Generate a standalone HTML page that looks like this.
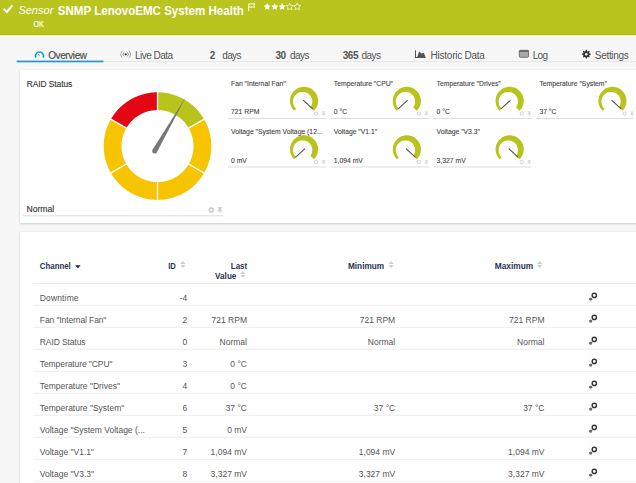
<!DOCTYPE html>
<html><head><meta charset="utf-8">
<style>
html,body{margin:0;padding:0;}
body{width:636px;height:483px;overflow:hidden;background:#f7f7f7;position:relative;font-family:"Liberation Sans",sans-serif;}
.hdr{position:absolute;left:0;top:0;width:636px;height:34px;background:#b9c41e;border-bottom:1px solid #b3be05;}
.hdrline{position:absolute;left:0;top:35px;width:636px;height:1px;background:#e9edc4;border-bottom:1px solid #fdfdfd;}
.panel{position:absolute;background:#fff;box-shadow:0 1px 2px rgba(0,0,0,0.16),0 0 1px rgba(0,0,0,0.12);}
svg{position:absolute;left:0;top:0;}
text{font-family:"Liberation Sans",sans-serif;}
</style></head>
<body>
<div class="hdr"></div>
<div class="hdrline"></div>
<div class="panel" style="left:19.5px;top:70px;width:630px;height:153px"></div>
<div class="panel" style="left:19.5px;top:231.5px;width:630px;height:270px"></div>
<svg width="636" height="483" viewBox="0 0 636 483">
<path d="M3.6 8.7 L6.9 11.9 L12.4 5.3" fill="none" stroke="#fff" stroke-width="2.1"/>
<text x="18.4" y="14" font-size="11" fill="#fff" font-style="italic" textLength="34.9" lengthAdjust="spacing">Sensor</text>
<text x="57.8" y="14.6" font-size="12.3" fill="#fff" font-weight="bold" textLength="186" lengthAdjust="spacingAndGlyphs">SNMP LenovoEMC System Health</text>
<text x="33.5" y="26.9" font-size="8.3" fill="#fff" stroke="#fff" stroke-width="0.2" textLength="10.4" lengthAdjust="spacingAndGlyphs">OK</text>
<path d="M248.7 11.2 V3.9 H255 L253.7 5.5 L255 7.1 H248.7" fill="none" stroke="#fff" stroke-width="0.95"/>
<path d="M267.20 3.10 L268.29 5.30 L270.72 5.66 L268.96 7.37 L269.37 9.79 L267.20 8.65 L265.03 9.79 L265.44 7.37 L263.68 5.66 L266.11 5.30Z" fill="#fff"/>
<path d="M274.70 3.10 L275.79 5.30 L278.22 5.66 L276.46 7.37 L276.87 9.79 L274.70 8.65 L272.53 9.79 L272.94 7.37 L271.18 5.66 L273.61 5.30Z" fill="#fff"/>
<path d="M282.20 3.10 L283.29 5.30 L285.72 5.66 L283.96 7.37 L284.37 9.79 L282.20 8.65 L280.03 9.79 L280.44 7.37 L278.68 5.66 L281.11 5.30Z" fill="#fff"/>
<path d="M289.70 3.10 L290.79 5.30 L293.22 5.66 L291.46 7.37 L291.87 9.79 L289.70 8.65 L287.53 9.79 L287.94 7.37 L286.18 5.66 L288.61 5.30Z" fill="none" stroke="#fff" stroke-width="0.7"/>
<path d="M297.20 3.10 L298.29 5.30 L300.72 5.66 L298.96 7.37 L299.37 9.79 L297.20 8.65 L295.03 9.79 L295.44 7.37 L293.68 5.66 L296.11 5.30Z" fill="none" stroke="#fff" stroke-width="0.7"/>
<rect x="17" y="61" width="619" height="1" fill="#e6e6e6"/>
<rect x="16.7" y="60.6" width="86.8" height="1.7" fill="#1b98d5"/>
<path d="M35.87 57.69 A4 4 0 1 1 43.13 57.69" fill="none" stroke="#1b98d5" stroke-width="1.6"/>
<line x1="40" y1="56" x2="38" y2="54.3" stroke="#1b98d5" stroke-width="0.8"/>
<text x="48.2" y="58.9" font-size="10" fill="#4b4b4b" stroke="#4b4b4b" stroke-width="0.15" textLength="38.9" lengthAdjust="spacing">Overview</text>
<circle cx="125.7" cy="54.3" r="1.1" fill="#333"/>
<path d="M124 52.2 A3 3 0 0 0 124 56.4 M127.4 52.2 A3 3 0 0 1 127.4 56.4" fill="none" stroke="#888" stroke-width="0.9"/>
<path d="M122.4 50.8 A5.2 5.2 0 0 0 122.4 57.8 M129 50.8 A5.2 5.2 0 0 1 129 57.8" fill="none" stroke="#999" stroke-width="0.9"/>
<text x="134.9" y="58.9" font-size="10" fill="#555" textLength="38.2" lengthAdjust="spacing">Live Data</text>
<text x="209.7" y="58.9" font-size="10" fill="#555" font-weight="bold">2</text>
<text x="222.2" y="58.9" font-size="10" fill="#555" textLength="19.3" lengthAdjust="spacing">days</text>
<text x="275.5" y="58.9" font-size="10" fill="#555" font-weight="bold" textLength="10.5" lengthAdjust="spacing">30</text>
<text x="290.1" y="58.9" font-size="10" fill="#555" textLength="19.3" lengthAdjust="spacing">days</text>
<text x="342.7" y="58.9" font-size="10" fill="#555" font-weight="bold" textLength="15.8" lengthAdjust="spacing">365</text>
<text x="361.6" y="58.9" font-size="10" fill="#555" textLength="19.3" lengthAdjust="spacing">days</text>
<path d="M415 50.3 H416 V57 H417.2 L419.2 51.4 L421.5 53.6 L423.9 52.8 L425.6 57.4 V58 H415Z" fill="#555"/>
<text x="430.6" y="58.9" font-size="10" fill="#555" textLength="54.3" lengthAdjust="spacing">Historic Data</text>
<rect x="519.3" y="50.3" width="9.2" height="7" rx="1" fill="#aaa" stroke="#666" stroke-width="0.9"/>
<rect x="519.3" y="50.3" width="9.2" height="1.6" fill="#666"/>
<text x="532.8" y="58.9" font-size="10" fill="#555" textLength="15.2" lengthAdjust="spacing">Log</text>
<path d="M585.87 49.82 L586.73 49.82 L587.23 51.14 L587.81 51.38 L589.09 50.80 L589.70 51.41 L589.12 52.69 L589.36 53.27 L590.68 53.77 L590.68 54.63 L589.36 55.13 L589.12 55.71 L589.70 56.99 L589.09 57.60 L587.81 57.02 L587.23 57.26 L586.73 58.58 L585.87 58.58 L585.37 57.26 L584.79 57.02 L583.51 57.60 L582.90 56.99 L583.48 55.71 L583.24 55.13 L581.92 54.63 L581.92 53.77 L583.24 53.27 L583.48 52.69 L582.90 51.41 L583.51 50.80 L584.79 51.38 L585.37 51.14Z" fill="#333" fill-rule="evenodd"/>
<circle cx="586.3" cy="54.2" r="1.3" fill="#f7f7f7"/>
<text x="594.8" y="58.9" font-size="10" fill="#555" textLength="34" lengthAdjust="spacing">Settings</text>
<text x="26.7" y="86.8" font-size="8.4" fill="#3a3a3a" stroke="#3a3a3a" stroke-width="0.15" textLength="45.6" lengthAdjust="spacing">RAID Status</text>
<text x="26.5" y="211.5" font-size="8.6" fill="#3a3a3a" stroke="#3a3a3a" stroke-width="0.15" textLength="27.6" lengthAdjust="spacing">Normal</text>
<rect x="23" y="215.3" width="200.4" height="1" fill="#ddd"/>
<circle cx="211.3" cy="210" r="2.05" fill="none" stroke="#cbcbcb" stroke-width="1.5" stroke-dasharray="1.2 0.4"/>
<circle cx="211.3" cy="210" r="1.9" fill="none" stroke="#cbcbcb" stroke-width="1.2"/>
<rect x="217.6" y="207.20" width="4.6" height="1" fill="#cbcbcb"/>
<rect x="218.6" y="208.00" width="2.6" height="2.6" fill="#cbcbcb"/>
<rect x="217.4" y="210.50" width="5" height="1" fill="#cbcbcb"/>
<rect x="219.6" y="211.50" width="0.7" height="1.8" fill="#cbcbcb"/>
<path d="M157.50 92.30 L158.91 92.32 L160.32 92.37 L161.72 92.47 L163.12 92.59 L164.52 92.76 L165.92 92.96 L167.30 93.20 L168.69 93.48 L170.06 93.79 L171.42 94.13 L172.78 94.52 L174.13 94.93 L175.46 95.39 L176.78 95.87 L178.09 96.40 L179.38 96.95 L180.66 97.54 L181.92 98.16 L183.17 98.82 L184.40 99.51 L185.61 100.23 L186.80 100.98 L187.97 101.76 L189.12 102.57 L190.25 103.42 L191.36 104.29 L192.44 105.19 L193.50 106.12 L194.53 107.07 L195.54 108.06 L196.53 109.07 L197.48 110.10 L198.41 111.16 L199.31 112.24 L200.18 113.35 L201.03 114.48 L201.84 115.63 L202.62 116.80 L203.37 117.99 L204.09 119.20 L188.68 128.10 L188.20 127.29 L187.69 126.49 L187.17 125.71 L186.62 124.94 L186.06 124.18 L185.48 123.44 L184.87 122.72 L184.25 122.01 L183.61 121.32 L182.96 120.64 L182.28 119.99 L181.59 119.35 L180.88 118.73 L180.16 118.12 L179.42 117.54 L178.66 116.98 L177.89 116.43 L177.11 115.91 L176.31 115.40 L175.50 114.92 L174.68 114.46 L173.84 114.02 L173.00 113.61 L172.14 113.21 L171.28 112.84 L170.40 112.49 L169.52 112.16 L168.62 111.86 L167.72 111.58 L166.82 111.33 L165.90 111.09 L164.98 110.89 L164.06 110.70 L163.13 110.54 L162.20 110.41 L161.26 110.30 L160.32 110.21 L159.38 110.15 L158.44 110.11 L157.50 110.10Z" fill="#b8c31c"/>
<path d="M204.09 119.20 L204.78 120.43 L205.44 121.68 L206.06 122.94 L206.65 124.22 L207.20 125.51 L207.73 126.82 L208.21 128.14 L208.67 129.47 L209.08 130.82 L209.47 132.18 L209.81 133.54 L210.12 134.91 L210.40 136.30 L210.64 137.68 L210.84 139.08 L211.01 140.48 L211.13 141.88 L211.23 143.28 L211.28 144.69 L211.30 146.10 L211.28 147.51 L211.23 148.92 L211.13 150.32 L211.01 151.72 L210.84 153.12 L210.64 154.52 L210.40 155.90 L210.12 157.29 L209.81 158.66 L209.47 160.02 L209.08 161.38 L208.67 162.73 L208.21 164.06 L207.73 165.38 L207.20 166.69 L206.65 167.98 L206.06 169.26 L205.44 170.52 L204.78 171.77 L204.09 173.00 L188.68 164.10 L189.14 163.28 L189.58 162.44 L189.99 161.60 L190.39 160.74 L190.76 159.88 L191.11 159.00 L191.44 158.12 L191.74 157.22 L192.02 156.32 L192.27 155.42 L192.51 154.50 L192.71 153.58 L192.90 152.66 L193.06 151.73 L193.19 150.80 L193.30 149.86 L193.39 148.92 L193.45 147.98 L193.49 147.04 L193.50 146.10 L193.49 145.16 L193.45 144.22 L193.39 143.28 L193.30 142.34 L193.19 141.40 L193.06 140.47 L192.90 139.54 L192.71 138.62 L192.51 137.70 L192.27 136.78 L192.02 135.88 L191.74 134.98 L191.44 134.08 L191.11 133.20 L190.76 132.32 L190.39 131.46 L189.99 130.60 L189.58 129.76 L189.14 128.92 L188.68 128.10Z" fill="#f6c400"/>
<path d="M204.09 173.00 L203.37 174.21 L202.62 175.40 L201.84 176.57 L201.03 177.72 L200.18 178.85 L199.31 179.96 L198.41 181.04 L197.48 182.10 L196.53 183.13 L195.54 184.14 L194.53 185.13 L193.50 186.08 L192.44 187.01 L191.36 187.91 L190.25 188.78 L189.12 189.63 L187.97 190.44 L186.80 191.22 L185.61 191.97 L184.40 192.69 L183.17 193.38 L181.92 194.04 L180.66 194.66 L179.38 195.25 L178.09 195.80 L176.78 196.33 L175.46 196.81 L174.13 197.27 L172.78 197.68 L171.42 198.07 L170.06 198.41 L168.69 198.72 L167.30 199.00 L165.92 199.24 L164.52 199.44 L163.12 199.61 L161.72 199.73 L160.32 199.83 L158.91 199.88 L157.50 199.90 L157.50 182.10 L158.44 182.09 L159.38 182.05 L160.32 181.99 L161.26 181.90 L162.20 181.79 L163.13 181.66 L164.06 181.50 L164.98 181.31 L165.90 181.11 L166.82 180.87 L167.72 180.62 L168.62 180.34 L169.52 180.04 L170.40 179.71 L171.28 179.36 L172.14 178.99 L173.00 178.59 L173.84 178.18 L174.68 177.74 L175.50 177.28 L176.31 176.80 L177.11 176.29 L177.89 175.77 L178.66 175.22 L179.42 174.66 L180.16 174.08 L180.88 173.47 L181.59 172.85 L182.28 172.21 L182.96 171.56 L183.61 170.88 L184.25 170.19 L184.87 169.48 L185.48 168.76 L186.06 168.02 L186.62 167.26 L187.17 166.49 L187.69 165.71 L188.20 164.91 L188.68 164.10Z" fill="#f6c400"/>
<path d="M157.50 199.90 L156.09 199.88 L154.68 199.83 L153.28 199.73 L151.88 199.61 L150.48 199.44 L149.08 199.24 L147.70 199.00 L146.31 198.72 L144.94 198.41 L143.58 198.07 L142.22 197.68 L140.87 197.27 L139.54 196.81 L138.22 196.33 L136.91 195.80 L135.62 195.25 L134.34 194.66 L133.08 194.04 L131.83 193.38 L130.60 192.69 L129.39 191.97 L128.20 191.22 L127.03 190.44 L125.88 189.63 L124.75 188.78 L123.64 187.91 L122.56 187.01 L121.50 186.08 L120.47 185.13 L119.46 184.14 L118.47 183.13 L117.52 182.10 L116.59 181.04 L115.69 179.96 L114.82 178.85 L113.97 177.72 L113.16 176.57 L112.38 175.40 L111.63 174.21 L110.91 173.00 L126.32 164.10 L126.80 164.91 L127.31 165.71 L127.83 166.49 L128.38 167.26 L128.94 168.02 L129.52 168.76 L130.13 169.48 L130.75 170.19 L131.39 170.88 L132.04 171.56 L132.72 172.21 L133.41 172.85 L134.12 173.47 L134.84 174.08 L135.58 174.66 L136.34 175.22 L137.11 175.77 L137.89 176.29 L138.69 176.80 L139.50 177.28 L140.32 177.74 L141.16 178.18 L142.00 178.59 L142.86 178.99 L143.72 179.36 L144.60 179.71 L145.48 180.04 L146.38 180.34 L147.28 180.62 L148.18 180.87 L149.10 181.11 L150.02 181.31 L150.94 181.50 L151.87 181.66 L152.80 181.79 L153.74 181.90 L154.68 181.99 L155.62 182.05 L156.56 182.09 L157.50 182.10Z" fill="#f6c400"/>
<path d="M110.91 173.00 L110.22 171.77 L109.56 170.52 L108.94 169.26 L108.35 167.98 L107.80 166.69 L107.27 165.38 L106.79 164.06 L106.33 162.73 L105.92 161.38 L105.53 160.02 L105.19 158.66 L104.88 157.29 L104.60 155.90 L104.36 154.52 L104.16 153.12 L103.99 151.72 L103.87 150.32 L103.77 148.92 L103.72 147.51 L103.70 146.10 L103.72 144.69 L103.77 143.28 L103.87 141.88 L103.99 140.48 L104.16 139.08 L104.36 137.68 L104.60 136.30 L104.88 134.91 L105.19 133.54 L105.53 132.18 L105.92 130.82 L106.33 129.47 L106.79 128.14 L107.27 126.82 L107.80 125.51 L108.35 124.22 L108.94 122.94 L109.56 121.68 L110.22 120.43 L110.91 119.20 L126.32 128.10 L125.86 128.92 L125.42 129.76 L125.01 130.60 L124.61 131.46 L124.24 132.32 L123.89 133.20 L123.56 134.08 L123.26 134.98 L122.98 135.88 L122.73 136.78 L122.49 137.70 L122.29 138.62 L122.10 139.54 L121.94 140.47 L121.81 141.40 L121.70 142.34 L121.61 143.28 L121.55 144.22 L121.51 145.16 L121.50 146.10 L121.51 147.04 L121.55 147.98 L121.61 148.92 L121.70 149.86 L121.81 150.80 L121.94 151.73 L122.10 152.66 L122.29 153.58 L122.49 154.50 L122.73 155.42 L122.98 156.32 L123.26 157.22 L123.56 158.12 L123.89 159.00 L124.24 159.88 L124.61 160.74 L125.01 161.60 L125.42 162.44 L125.86 163.28 L126.32 164.10Z" fill="#f6c400"/>
<path d="M110.91 119.20 L111.63 117.99 L112.38 116.80 L113.16 115.63 L113.97 114.48 L114.82 113.35 L115.69 112.24 L116.59 111.16 L117.52 110.10 L118.47 109.07 L119.46 108.06 L120.47 107.07 L121.50 106.12 L122.56 105.19 L123.64 104.29 L124.75 103.42 L125.88 102.57 L127.03 101.76 L128.20 100.98 L129.39 100.23 L130.60 99.51 L131.83 98.82 L133.08 98.16 L134.34 97.54 L135.62 96.95 L136.91 96.40 L138.22 95.87 L139.54 95.39 L140.87 94.93 L142.22 94.52 L143.58 94.13 L144.94 93.79 L146.31 93.48 L147.70 93.20 L149.08 92.96 L150.48 92.76 L151.88 92.59 L153.28 92.47 L154.68 92.37 L156.09 92.32 L157.50 92.30 L157.50 110.10 L156.56 110.11 L155.62 110.15 L154.68 110.21 L153.74 110.30 L152.80 110.41 L151.87 110.54 L150.94 110.70 L150.02 110.89 L149.10 111.09 L148.18 111.33 L147.28 111.58 L146.38 111.86 L145.48 112.16 L144.60 112.49 L143.72 112.84 L142.86 113.21 L142.00 113.61 L141.16 114.02 L140.32 114.46 L139.50 114.92 L138.69 115.40 L137.89 115.91 L137.11 116.43 L136.34 116.98 L135.58 117.54 L134.84 118.12 L134.12 118.73 L133.41 119.35 L132.72 119.99 L132.04 120.64 L131.39 121.32 L130.75 122.01 L130.13 122.72 L129.52 123.44 L128.94 124.18 L128.38 124.94 L127.83 125.71 L127.31 126.49 L126.80 127.29 L126.32 128.10Z" fill="#e30613"/>
<line x1="157.50" y1="113.70" x2="157.50" y2="89.61" stroke="#fff" stroke-width="1.3"/>
<line x1="185.56" y1="129.90" x2="206.42" y2="117.85" stroke="#fff" stroke-width="1.3"/>
<line x1="185.56" y1="162.30" x2="206.42" y2="174.34" stroke="#fff" stroke-width="1.3"/>
<line x1="157.50" y1="178.50" x2="157.50" y2="202.59" stroke="#fff" stroke-width="1.3"/>
<line x1="129.44" y1="162.30" x2="108.58" y2="174.35" stroke="#fff" stroke-width="1.3"/>
<line x1="129.44" y1="129.90" x2="108.58" y2="117.85" stroke="#fff" stroke-width="1.3"/>
<path d="M156.87 152.20 L186.00 96.74 L152.53 149.70Z" fill="#777"/>
<circle cx="154.70" cy="150.95" r="2.5" fill="#777"/>
<text x="231.0" y="85.5" font-size="6.8" fill="#444" stroke="#444" stroke-width="0.1">Fan "Internal Fan"</text>
<text x="231.0" y="114.4" font-size="6.8" fill="#444" stroke="#444" stroke-width="0.1">721 RPM</text>
<path d="M294.12 110.78 L293.37 109.97 L292.68 109.11 L292.07 108.19 L291.53 107.23 L291.07 106.23 L290.69 105.19 L290.39 104.13 L290.17 103.05 L290.04 101.95 L290.00 100.85 L290.04 99.75 L290.17 98.65 L290.39 97.57 L290.69 96.51 L291.07 95.47 L291.53 94.47 L292.07 93.51 L292.68 92.59 L293.37 91.73 L294.12 90.92 L294.93 90.17 L295.79 89.48 L296.71 88.87 L297.67 88.33 L298.67 87.87 L299.71 87.49 L300.77 87.19 L301.85 86.97 L302.95 86.84 L304.05 86.80 L305.15 86.84 L306.25 86.97 L307.33 87.19 L308.39 87.49 L309.43 87.87 L310.43 88.33 L311.39 88.87 L312.31 89.48 L313.17 90.17 L313.98 90.92 L314.73 91.73 L315.42 92.59 L316.03 93.51 L316.57 94.47 L317.03 95.47 L317.41 96.51 L317.71 97.57 L317.93 98.65 L318.06 99.75 L318.10 100.85 L318.06 101.95 L317.93 103.05 L317.71 104.13 L317.41 105.19 L317.03 106.23 L316.57 107.23 L316.03 108.19 L315.42 109.11 L314.73 109.97 L313.98 110.78 L310.44 107.24 L310.84 106.65 L311.19 106.04 L311.49 105.41 L311.75 104.77 L311.95 104.12 L312.11 103.47 L312.22 102.81 L312.28 102.15 L312.30 101.50 L312.27 100.85 L312.21 100.21 L312.10 99.58 L311.94 98.95 L311.75 98.35 L311.52 97.75 L311.25 97.18 L310.95 96.62 L310.61 96.09 L310.23 95.57 L309.81 95.09 L309.37 94.62 L308.89 94.19 L308.38 93.78 L307.84 93.41 L307.27 93.08 L306.67 92.78 L306.05 92.52 L305.40 92.30 L304.74 92.13 L304.05 92.00 L303.35 91.93 L302.63 91.90 L301.91 91.93 L301.18 92.01 L300.45 92.15 L299.72 92.36 L299.00 92.62 L298.30 92.94 L297.62 93.32 L296.96 93.76 L296.33 94.26 L295.74 94.81 L295.19 95.42 L294.70 96.08 L294.25 96.79 L293.87 97.54 L293.55 98.33 L293.30 99.15 L293.13 99.99 L293.03 100.85 L293.00 101.72 L293.06 102.59 L293.19 103.46 L293.40 104.31 L293.69 105.14 L294.06 105.94 L294.49 106.71 L295.00 107.43 L295.56 108.10 L296.19 108.71Z" fill="#b8c31c"/>
<line x1="303.17" y1="100.03" x2="312.68" y2="108.90" stroke="#505050" stroke-width="1.05"/>
<circle cx="316.1" cy="113.6" r="1.6" fill="none" stroke="#d6d6d6" stroke-width="1.1"/>
<rect x="321.9" y="111.40" width="3.4" height="0.8" fill="#d6d6d6"/>
<rect x="322.59999999999997" y="112.10" width="2" height="2" fill="#d6d6d6"/>
<rect x="321.79999999999995" y="114.00" width="3.6" height="0.8" fill="#d6d6d6"/>
<rect x="323.29999999999995" y="114.80" width="0.6" height="1.5" fill="#d6d6d6"/>
<rect x="228.00" y="118.00" width="98" height="1" fill="#ddd"/>
<text x="333.8" y="85.5" font-size="6.8" fill="#444" stroke="#444" stroke-width="0.1">Temperature "CPU"</text>
<text x="333.8" y="114.4" font-size="6.8" fill="#444" stroke="#444" stroke-width="0.1">0 °C</text>
<path d="M396.92 110.78 L396.17 109.97 L395.48 109.11 L394.87 108.19 L394.33 107.23 L393.87 106.23 L393.49 105.19 L393.19 104.13 L392.97 103.05 L392.84 101.95 L392.80 100.85 L392.84 99.75 L392.97 98.65 L393.19 97.57 L393.49 96.51 L393.87 95.47 L394.33 94.47 L394.87 93.51 L395.48 92.59 L396.17 91.73 L396.92 90.92 L397.73 90.17 L398.59 89.48 L399.51 88.87 L400.47 88.33 L401.47 87.87 L402.51 87.49 L403.57 87.19 L404.65 86.97 L405.75 86.84 L406.85 86.80 L407.95 86.84 L409.05 86.97 L410.13 87.19 L411.19 87.49 L412.23 87.87 L413.23 88.33 L414.19 88.87 L415.11 89.48 L415.97 90.17 L416.78 90.92 L417.53 91.73 L418.22 92.59 L418.83 93.51 L419.37 94.47 L419.83 95.47 L420.21 96.51 L420.51 97.57 L420.73 98.65 L420.86 99.75 L420.90 100.85 L420.86 101.95 L420.73 103.05 L420.51 104.13 L420.21 105.19 L419.83 106.23 L419.37 107.23 L418.83 108.19 L418.22 109.11 L417.53 109.97 L416.78 110.78 L413.24 107.24 L413.64 106.65 L413.99 106.04 L414.29 105.41 L414.55 104.77 L414.75 104.12 L414.91 103.47 L415.02 102.81 L415.08 102.15 L415.10 101.50 L415.07 100.85 L415.01 100.21 L414.90 99.58 L414.74 98.95 L414.55 98.35 L414.32 97.75 L414.05 97.18 L413.75 96.62 L413.41 96.09 L413.03 95.57 L412.61 95.09 L412.17 94.62 L411.69 94.19 L411.18 93.78 L410.64 93.41 L410.07 93.08 L409.47 92.78 L408.85 92.52 L408.20 92.30 L407.54 92.13 L406.85 92.00 L406.15 91.93 L405.43 91.90 L404.71 91.93 L403.98 92.01 L403.25 92.15 L402.52 92.36 L401.80 92.62 L401.10 92.94 L400.42 93.32 L399.76 93.76 L399.13 94.26 L398.54 94.81 L397.99 95.42 L397.50 96.08 L397.05 96.79 L396.67 97.54 L396.35 98.33 L396.10 99.15 L395.93 99.99 L395.83 100.85 L395.80 101.72 L395.86 102.59 L395.99 103.46 L396.20 104.31 L396.49 105.14 L396.86 105.94 L397.29 106.71 L397.80 107.43 L398.36 108.10 L398.99 108.71Z" fill="#b8c31c"/>
<line x1="407.73" y1="100.03" x2="398.22" y2="108.90" stroke="#505050" stroke-width="1.05"/>
<circle cx="418.90000000000003" cy="113.6" r="1.6" fill="none" stroke="#d6d6d6" stroke-width="1.1"/>
<rect x="424.7" y="111.40" width="3.4" height="0.8" fill="#d6d6d6"/>
<rect x="425.4" y="112.10" width="2" height="2" fill="#d6d6d6"/>
<rect x="424.59999999999997" y="114.00" width="3.6" height="0.8" fill="#d6d6d6"/>
<rect x="426.09999999999997" y="114.80" width="0.6" height="1.5" fill="#d6d6d6"/>
<rect x="330.80" y="118.00" width="98" height="1" fill="#ddd"/>
<text x="436.6" y="85.5" font-size="6.8" fill="#444" stroke="#444" stroke-width="0.1">Temperature "Drives"</text>
<text x="436.6" y="114.4" font-size="6.8" fill="#444" stroke="#444" stroke-width="0.1">0 °C</text>
<path d="M499.72 110.78 L498.97 109.97 L498.28 109.11 L497.67 108.19 L497.13 107.23 L496.67 106.23 L496.29 105.19 L495.99 104.13 L495.77 103.05 L495.64 101.95 L495.60 100.85 L495.64 99.75 L495.77 98.65 L495.99 97.57 L496.29 96.51 L496.67 95.47 L497.13 94.47 L497.67 93.51 L498.28 92.59 L498.97 91.73 L499.72 90.92 L500.53 90.17 L501.39 89.48 L502.31 88.87 L503.27 88.33 L504.27 87.87 L505.31 87.49 L506.37 87.19 L507.45 86.97 L508.55 86.84 L509.65 86.80 L510.75 86.84 L511.85 86.97 L512.93 87.19 L513.99 87.49 L515.03 87.87 L516.03 88.33 L516.99 88.87 L517.91 89.48 L518.77 90.17 L519.58 90.92 L520.33 91.73 L521.02 92.59 L521.63 93.51 L522.17 94.47 L522.63 95.47 L523.01 96.51 L523.31 97.57 L523.53 98.65 L523.66 99.75 L523.70 100.85 L523.66 101.95 L523.53 103.05 L523.31 104.13 L523.01 105.19 L522.63 106.23 L522.17 107.23 L521.63 108.19 L521.02 109.11 L520.33 109.97 L519.58 110.78 L516.04 107.24 L516.44 106.65 L516.79 106.04 L517.09 105.41 L517.35 104.77 L517.55 104.12 L517.71 103.47 L517.82 102.81 L517.88 102.15 L517.90 101.50 L517.87 100.85 L517.81 100.21 L517.70 99.58 L517.54 98.95 L517.35 98.35 L517.12 97.75 L516.85 97.18 L516.55 96.62 L516.21 96.09 L515.83 95.57 L515.41 95.09 L514.97 94.62 L514.49 94.19 L513.98 93.78 L513.44 93.41 L512.87 93.08 L512.27 92.78 L511.65 92.52 L511.00 92.30 L510.34 92.13 L509.65 92.00 L508.95 91.93 L508.23 91.90 L507.51 91.93 L506.78 92.01 L506.05 92.15 L505.32 92.36 L504.60 92.62 L503.90 92.94 L503.22 93.32 L502.56 93.76 L501.93 94.26 L501.34 94.81 L500.79 95.42 L500.30 96.08 L499.85 96.79 L499.47 97.54 L499.15 98.33 L498.90 99.15 L498.73 99.99 L498.63 100.85 L498.60 101.72 L498.66 102.59 L498.79 103.46 L499.00 104.31 L499.29 105.14 L499.66 105.94 L500.09 106.71 L500.60 107.43 L501.16 108.10 L501.79 108.71Z" fill="#b8c31c"/>
<line x1="510.53" y1="100.03" x2="501.02" y2="108.90" stroke="#505050" stroke-width="1.05"/>
<circle cx="521.7" cy="113.6" r="1.6" fill="none" stroke="#d6d6d6" stroke-width="1.1"/>
<rect x="527.5" y="111.40" width="3.4" height="0.8" fill="#d6d6d6"/>
<rect x="528.2" y="112.10" width="2" height="2" fill="#d6d6d6"/>
<rect x="527.4" y="114.00" width="3.6" height="0.8" fill="#d6d6d6"/>
<rect x="528.9" y="114.80" width="0.6" height="1.5" fill="#d6d6d6"/>
<rect x="433.60" y="118.00" width="98" height="1" fill="#ddd"/>
<text x="539.4" y="85.5" font-size="6.8" fill="#444" stroke="#444" stroke-width="0.1">Temperature "System"</text>
<text x="539.4" y="114.4" font-size="6.8" fill="#444" stroke="#444" stroke-width="0.1">37 °C</text>
<path d="M602.52 110.78 L601.77 109.97 L601.08 109.11 L600.47 108.19 L599.93 107.23 L599.47 106.23 L599.09 105.19 L598.79 104.13 L598.57 103.05 L598.44 101.95 L598.40 100.85 L598.44 99.75 L598.57 98.65 L598.79 97.57 L599.09 96.51 L599.47 95.47 L599.93 94.47 L600.47 93.51 L601.08 92.59 L601.77 91.73 L602.52 90.92 L603.33 90.17 L604.19 89.48 L605.11 88.87 L606.07 88.33 L607.07 87.87 L608.11 87.49 L609.17 87.19 L610.25 86.97 L611.35 86.84 L612.45 86.80 L613.55 86.84 L614.65 86.97 L615.73 87.19 L616.79 87.49 L617.83 87.87 L618.83 88.33 L619.79 88.87 L620.71 89.48 L621.57 90.17 L622.38 90.92 L623.13 91.73 L623.82 92.59 L624.43 93.51 L624.97 94.47 L625.43 95.47 L625.81 96.51 L626.11 97.57 L626.33 98.65 L626.46 99.75 L626.50 100.85 L626.46 101.95 L626.33 103.05 L626.11 104.13 L625.81 105.19 L625.43 106.23 L624.97 107.23 L624.43 108.19 L623.82 109.11 L623.13 109.97 L622.38 110.78 L618.84 107.24 L619.24 106.65 L619.59 106.04 L619.89 105.41 L620.15 104.77 L620.35 104.12 L620.51 103.47 L620.62 102.81 L620.68 102.15 L620.70 101.50 L620.67 100.85 L620.61 100.21 L620.50 99.58 L620.34 98.95 L620.15 98.35 L619.92 97.75 L619.65 97.18 L619.35 96.62 L619.01 96.09 L618.63 95.57 L618.21 95.09 L617.77 94.62 L617.29 94.19 L616.78 93.78 L616.24 93.41 L615.67 93.08 L615.07 92.78 L614.45 92.52 L613.80 92.30 L613.14 92.13 L612.45 92.00 L611.75 91.93 L611.03 91.90 L610.31 91.93 L609.58 92.01 L608.85 92.15 L608.12 92.36 L607.40 92.62 L606.70 92.94 L606.02 93.32 L605.36 93.76 L604.73 94.26 L604.14 94.81 L603.59 95.42 L603.10 96.08 L602.65 96.79 L602.27 97.54 L601.95 98.33 L601.70 99.15 L601.53 99.99 L601.43 100.85 L601.40 101.72 L601.46 102.59 L601.59 103.46 L601.80 104.31 L602.09 105.14 L602.46 105.94 L602.89 106.71 L603.40 107.43 L603.96 108.10 L604.59 108.71Z" fill="#b8c31c"/>
<line x1="611.57" y1="100.03" x2="621.08" y2="108.90" stroke="#505050" stroke-width="1.05"/>
<circle cx="624.5" cy="113.6" r="1.6" fill="none" stroke="#d6d6d6" stroke-width="1.1"/>
<rect x="630.3" y="111.40" width="3.4" height="0.8" fill="#d6d6d6"/>
<rect x="631.0" y="112.10" width="2" height="2" fill="#d6d6d6"/>
<rect x="630.1999999999999" y="114.00" width="3.6" height="0.8" fill="#d6d6d6"/>
<rect x="631.6999999999999" y="114.80" width="0.6" height="1.5" fill="#d6d6d6"/>
<rect x="536.40" y="118.00" width="98" height="1" fill="#ddd"/>
<text x="231.0" y="134.0" font-size="6.8" fill="#444" stroke="#444" stroke-width="0.1">Voltage "System Voltage (12...</text>
<text x="231.0" y="162.9" font-size="6.8" fill="#444" stroke="#444" stroke-width="0.1">0 mV</text>
<path d="M294.12 159.28 L293.37 158.47 L292.68 157.61 L292.07 156.69 L291.53 155.73 L291.07 154.73 L290.69 153.69 L290.39 152.63 L290.17 151.55 L290.04 150.45 L290.00 149.35 L290.04 148.25 L290.17 147.15 L290.39 146.07 L290.69 145.01 L291.07 143.97 L291.53 142.97 L292.07 142.01 L292.68 141.09 L293.37 140.23 L294.12 139.42 L294.93 138.67 L295.79 137.98 L296.71 137.37 L297.67 136.83 L298.67 136.37 L299.71 135.99 L300.77 135.69 L301.85 135.47 L302.95 135.34 L304.05 135.30 L305.15 135.34 L306.25 135.47 L307.33 135.69 L308.39 135.99 L309.43 136.37 L310.43 136.83 L311.39 137.37 L312.31 137.98 L313.17 138.67 L313.98 139.42 L314.73 140.23 L315.42 141.09 L316.03 142.01 L316.57 142.97 L317.03 143.97 L317.41 145.01 L317.71 146.07 L317.93 147.15 L318.06 148.25 L318.10 149.35 L318.06 150.45 L317.93 151.55 L317.71 152.63 L317.41 153.69 L317.03 154.73 L316.57 155.73 L316.03 156.69 L315.42 157.61 L314.73 158.47 L313.98 159.28 L310.44 155.74 L310.84 155.15 L311.19 154.54 L311.49 153.91 L311.75 153.27 L311.95 152.62 L312.11 151.97 L312.22 151.31 L312.28 150.65 L312.30 150.00 L312.27 149.35 L312.21 148.71 L312.10 148.08 L311.94 147.45 L311.75 146.85 L311.52 146.25 L311.25 145.68 L310.95 145.12 L310.61 144.59 L310.23 144.07 L309.81 143.59 L309.37 143.12 L308.89 142.69 L308.38 142.28 L307.84 141.91 L307.27 141.58 L306.67 141.28 L306.05 141.02 L305.40 140.80 L304.74 140.63 L304.05 140.50 L303.35 140.43 L302.63 140.40 L301.91 140.43 L301.18 140.51 L300.45 140.65 L299.72 140.86 L299.00 141.12 L298.30 141.44 L297.62 141.82 L296.96 142.26 L296.33 142.76 L295.74 143.31 L295.19 143.92 L294.70 144.58 L294.25 145.29 L293.87 146.04 L293.55 146.83 L293.30 147.65 L293.13 148.49 L293.03 149.35 L293.00 150.22 L293.06 151.09 L293.19 151.96 L293.40 152.81 L293.69 153.64 L294.06 154.44 L294.49 155.21 L295.00 155.93 L295.56 156.60 L296.19 157.21Z" fill="#b8c31c"/>
<line x1="304.93" y1="148.53" x2="295.42" y2="157.40" stroke="#505050" stroke-width="1.05"/>
<circle cx="316.1" cy="162.1" r="1.6" fill="none" stroke="#d6d6d6" stroke-width="1.1"/>
<rect x="321.9" y="159.90" width="3.4" height="0.8" fill="#d6d6d6"/>
<rect x="322.59999999999997" y="160.60" width="2" height="2" fill="#d6d6d6"/>
<rect x="321.79999999999995" y="162.50" width="3.6" height="0.8" fill="#d6d6d6"/>
<rect x="323.29999999999995" y="163.30" width="0.6" height="1.5" fill="#d6d6d6"/>
<rect x="228.00" y="166.50" width="98" height="1" fill="#ddd"/>
<text x="333.8" y="134.0" font-size="6.8" fill="#444" stroke="#444" stroke-width="0.1">Voltage "V1.1"</text>
<text x="333.8" y="162.9" font-size="6.8" fill="#444" stroke="#444" stroke-width="0.1">1,094 mV</text>
<path d="M396.92 159.28 L396.17 158.47 L395.48 157.61 L394.87 156.69 L394.33 155.73 L393.87 154.73 L393.49 153.69 L393.19 152.63 L392.97 151.55 L392.84 150.45 L392.80 149.35 L392.84 148.25 L392.97 147.15 L393.19 146.07 L393.49 145.01 L393.87 143.97 L394.33 142.97 L394.87 142.01 L395.48 141.09 L396.17 140.23 L396.92 139.42 L397.73 138.67 L398.59 137.98 L399.51 137.37 L400.47 136.83 L401.47 136.37 L402.51 135.99 L403.57 135.69 L404.65 135.47 L405.75 135.34 L406.85 135.30 L407.95 135.34 L409.05 135.47 L410.13 135.69 L411.19 135.99 L412.23 136.37 L413.23 136.83 L414.19 137.37 L415.11 137.98 L415.97 138.67 L416.78 139.42 L417.53 140.23 L418.22 141.09 L418.83 142.01 L419.37 142.97 L419.83 143.97 L420.21 145.01 L420.51 146.07 L420.73 147.15 L420.86 148.25 L420.90 149.35 L420.86 150.45 L420.73 151.55 L420.51 152.63 L420.21 153.69 L419.83 154.73 L419.37 155.73 L418.83 156.69 L418.22 157.61 L417.53 158.47 L416.78 159.28 L413.24 155.74 L413.64 155.15 L413.99 154.54 L414.29 153.91 L414.55 153.27 L414.75 152.62 L414.91 151.97 L415.02 151.31 L415.08 150.65 L415.10 150.00 L415.07 149.35 L415.01 148.71 L414.90 148.08 L414.74 147.45 L414.55 146.85 L414.32 146.25 L414.05 145.68 L413.75 145.12 L413.41 144.59 L413.03 144.07 L412.61 143.59 L412.17 143.12 L411.69 142.69 L411.18 142.28 L410.64 141.91 L410.07 141.58 L409.47 141.28 L408.85 141.02 L408.20 140.80 L407.54 140.63 L406.85 140.50 L406.15 140.43 L405.43 140.40 L404.71 140.43 L403.98 140.51 L403.25 140.65 L402.52 140.86 L401.80 141.12 L401.10 141.44 L400.42 141.82 L399.76 142.26 L399.13 142.76 L398.54 143.31 L397.99 143.92 L397.50 144.58 L397.05 145.29 L396.67 146.04 L396.35 146.83 L396.10 147.65 L395.93 148.49 L395.83 149.35 L395.80 150.22 L395.86 151.09 L395.99 151.96 L396.20 152.81 L396.49 153.64 L396.86 154.44 L397.29 155.21 L397.80 155.93 L398.36 156.60 L398.99 157.21Z" fill="#b8c31c"/>
<line x1="405.97" y1="148.53" x2="415.48" y2="157.40" stroke="#505050" stroke-width="1.05"/>
<circle cx="418.90000000000003" cy="162.1" r="1.6" fill="none" stroke="#d6d6d6" stroke-width="1.1"/>
<rect x="424.7" y="159.90" width="3.4" height="0.8" fill="#d6d6d6"/>
<rect x="425.4" y="160.60" width="2" height="2" fill="#d6d6d6"/>
<rect x="424.59999999999997" y="162.50" width="3.6" height="0.8" fill="#d6d6d6"/>
<rect x="426.09999999999997" y="163.30" width="0.6" height="1.5" fill="#d6d6d6"/>
<rect x="330.80" y="166.50" width="98" height="1" fill="#ddd"/>
<text x="436.6" y="134.0" font-size="6.8" fill="#444" stroke="#444" stroke-width="0.1">Voltage "V3.3"</text>
<text x="436.6" y="162.9" font-size="6.8" fill="#444" stroke="#444" stroke-width="0.1">3,327 mV</text>
<path d="M499.72 159.28 L498.97 158.47 L498.28 157.61 L497.67 156.69 L497.13 155.73 L496.67 154.73 L496.29 153.69 L495.99 152.63 L495.77 151.55 L495.64 150.45 L495.60 149.35 L495.64 148.25 L495.77 147.15 L495.99 146.07 L496.29 145.01 L496.67 143.97 L497.13 142.97 L497.67 142.01 L498.28 141.09 L498.97 140.23 L499.72 139.42 L500.53 138.67 L501.39 137.98 L502.31 137.37 L503.27 136.83 L504.27 136.37 L505.31 135.99 L506.37 135.69 L507.45 135.47 L508.55 135.34 L509.65 135.30 L510.75 135.34 L511.85 135.47 L512.93 135.69 L513.99 135.99 L515.03 136.37 L516.03 136.83 L516.99 137.37 L517.91 137.98 L518.77 138.67 L519.58 139.42 L520.33 140.23 L521.02 141.09 L521.63 142.01 L522.17 142.97 L522.63 143.97 L523.01 145.01 L523.31 146.07 L523.53 147.15 L523.66 148.25 L523.70 149.35 L523.66 150.45 L523.53 151.55 L523.31 152.63 L523.01 153.69 L522.63 154.73 L522.17 155.73 L521.63 156.69 L521.02 157.61 L520.33 158.47 L519.58 159.28 L516.04 155.74 L516.44 155.15 L516.79 154.54 L517.09 153.91 L517.35 153.27 L517.55 152.62 L517.71 151.97 L517.82 151.31 L517.88 150.65 L517.90 150.00 L517.87 149.35 L517.81 148.71 L517.70 148.08 L517.54 147.45 L517.35 146.85 L517.12 146.25 L516.85 145.68 L516.55 145.12 L516.21 144.59 L515.83 144.07 L515.41 143.59 L514.97 143.12 L514.49 142.69 L513.98 142.28 L513.44 141.91 L512.87 141.58 L512.27 141.28 L511.65 141.02 L511.00 140.80 L510.34 140.63 L509.65 140.50 L508.95 140.43 L508.23 140.40 L507.51 140.43 L506.78 140.51 L506.05 140.65 L505.32 140.86 L504.60 141.12 L503.90 141.44 L503.22 141.82 L502.56 142.26 L501.93 142.76 L501.34 143.31 L500.79 143.92 L500.30 144.58 L499.85 145.29 L499.47 146.04 L499.15 146.83 L498.90 147.65 L498.73 148.49 L498.63 149.35 L498.60 150.22 L498.66 151.09 L498.79 151.96 L499.00 152.81 L499.29 153.64 L499.66 154.44 L500.09 155.21 L500.60 155.93 L501.16 156.60 L501.79 157.21Z" fill="#b8c31c"/>
<line x1="508.77" y1="148.53" x2="518.28" y2="157.40" stroke="#505050" stroke-width="1.05"/>
<circle cx="521.7" cy="162.1" r="1.6" fill="none" stroke="#d6d6d6" stroke-width="1.1"/>
<rect x="527.5" y="159.90" width="3.4" height="0.8" fill="#d6d6d6"/>
<rect x="528.2" y="160.60" width="2" height="2" fill="#d6d6d6"/>
<rect x="527.4" y="162.50" width="3.6" height="0.8" fill="#d6d6d6"/>
<rect x="528.9" y="163.30" width="0.6" height="1.5" fill="#d6d6d6"/>
<rect x="433.60" y="166.50" width="98" height="1" fill="#ddd"/>
<text x="39.8" y="268.9" font-size="8.5" fill="#2a3350" font-weight="bold" textLength="31" lengthAdjust="spacingAndGlyphs">Channel</text>
<path d="M75.2 265.2 H80.6 L77.9 268.4Z" fill="#1e2540"/>
<text x="175.8" y="268.9" font-size="8.5" fill="#2a3350" font-weight="bold" text-anchor="end" textLength="7.6" lengthAdjust="spacingAndGlyphs">ID</text>
<path d="M180.2 264 L182.79999999999998 261 L185.39999999999998 264Z M180.2 265 L182.79999999999998 268 L185.39999999999998 265Z" fill="#cfcfcf"/>
<text x="247.2" y="268.9" font-size="8.5" fill="#2a3350" font-weight="bold" text-anchor="end" textLength="16.4" lengthAdjust="spacingAndGlyphs">Last</text>
<text x="236.4" y="278.7" font-size="8.5" fill="#2a3350" font-weight="bold" text-anchor="end" textLength="21.3" lengthAdjust="spacingAndGlyphs">Value</text>
<path d="M240.2 274 L242.79999999999998 271 L245.39999999999998 274Z M240.2 275 L242.79999999999998 278 L245.39999999999998 275Z" fill="#cfcfcf"/>
<text x="384.2" y="268.9" font-size="8.5" fill="#2a3350" font-weight="bold" text-anchor="end" textLength="36.3" lengthAdjust="spacingAndGlyphs">Minimum</text>
<path d="M388.5 264 L391.1 261 L393.7 264Z M388.5 265 L391.1 268 L393.7 265Z" fill="#cfcfcf"/>
<text x="533.2" y="268.9" font-size="8.5" fill="#2a3350" font-weight="bold" text-anchor="end" textLength="38.5" lengthAdjust="spacingAndGlyphs">Maximum</text>
<path d="M537.1 264 L539.7 261 L542.3000000000001 264Z M537.1 265 L539.7 268 L542.3000000000001 265Z" fill="#cfcfcf"/>
<rect x="33" y="283" width="603" height="1" fill="#ebebeb"/>
<text x="39.8" y="300.8" font-size="8.5" fill="#555" textLength="38.8" lengthAdjust="spacing">Downtime</text>
<text x="187.2" y="300.8" font-size="8.5" fill="#555" text-anchor="end">-4</text>
<circle cx="594.3" cy="295.40" r="2.1" fill="none" stroke="#333" stroke-width="1.4"/>
<circle cx="590.7" cy="299.10" r="1.7" fill="#6a6a6a"/>
<rect x="33" y="304.80" width="603" height="1" fill="#eeeeee"/>
<text x="39.8" y="322.8" font-size="8.5" fill="#555" textLength="66.6" lengthAdjust="spacing">Fan "Internal Fan"</text>
<text x="187.2" y="322.8" font-size="8.5" fill="#555" text-anchor="end">2</text>
<text x="247" y="322.8" font-size="8.5" fill="#555" text-anchor="end">721 RPM</text>
<text x="395.2" y="322.8" font-size="8.5" fill="#555" text-anchor="end">721 RPM</text>
<text x="544.5" y="322.8" font-size="8.5" fill="#555" text-anchor="end">721 RPM</text>
<circle cx="594.3" cy="317.40" r="2.1" fill="none" stroke="#333" stroke-width="1.4"/>
<circle cx="590.7" cy="321.10" r="1.7" fill="#6a6a6a"/>
<rect x="33" y="326.80" width="603" height="1" fill="#eeeeee"/>
<text x="39.8" y="344.8" font-size="8.5" fill="#555" textLength="45.7" lengthAdjust="spacing">RAID Status</text>
<text x="187.2" y="344.8" font-size="8.5" fill="#555" text-anchor="end">0</text>
<text x="247" y="344.8" font-size="8.5" fill="#555" text-anchor="end">Normal</text>
<text x="395.2" y="344.8" font-size="8.5" fill="#555" text-anchor="end">Normal</text>
<text x="544.5" y="344.8" font-size="8.5" fill="#555" text-anchor="end">Normal</text>
<circle cx="594.3" cy="339.40" r="2.1" fill="none" stroke="#333" stroke-width="1.4"/>
<circle cx="590.7" cy="343.10" r="1.7" fill="#6a6a6a"/>
<rect x="33" y="348.80" width="603" height="1" fill="#eeeeee"/>
<text x="39.8" y="366.8" font-size="8.5" fill="#555" textLength="72.7" lengthAdjust="spacing">Temperature "CPU"</text>
<text x="187.2" y="366.8" font-size="8.5" fill="#555" text-anchor="end">3</text>
<text x="247" y="366.8" font-size="8.5" fill="#555" text-anchor="end">0 °C</text>
<circle cx="594.3" cy="361.40" r="2.1" fill="none" stroke="#333" stroke-width="1.4"/>
<circle cx="590.7" cy="365.10" r="1.7" fill="#6a6a6a"/>
<rect x="33" y="370.80" width="603" height="1" fill="#eeeeee"/>
<text x="39.8" y="388.8" font-size="8.5" fill="#555">Temperature "Drives"</text>
<text x="187.2" y="388.8" font-size="8.5" fill="#555" text-anchor="end">4</text>
<text x="247" y="388.8" font-size="8.5" fill="#555" text-anchor="end">0 °C</text>
<circle cx="594.3" cy="383.40" r="2.1" fill="none" stroke="#333" stroke-width="1.4"/>
<circle cx="590.7" cy="387.10" r="1.7" fill="#6a6a6a"/>
<rect x="33" y="392.80" width="603" height="1" fill="#eeeeee"/>
<text x="39.8" y="410.8" font-size="8.5" fill="#555">Temperature "System"</text>
<text x="187.2" y="410.8" font-size="8.5" fill="#555" text-anchor="end">6</text>
<text x="247" y="410.8" font-size="8.5" fill="#555" text-anchor="end">37 °C</text>
<text x="395.2" y="410.8" font-size="8.5" fill="#555" text-anchor="end">37 °C</text>
<text x="544.5" y="410.8" font-size="8.5" fill="#555" text-anchor="end">37 °C</text>
<circle cx="594.3" cy="405.40" r="2.1" fill="none" stroke="#333" stroke-width="1.4"/>
<circle cx="590.7" cy="409.10" r="1.7" fill="#6a6a6a"/>
<rect x="33" y="414.80" width="603" height="1" fill="#eeeeee"/>
<text x="39.8" y="432.8" font-size="8.5" fill="#555">Voltage "System Voltage (...</text>
<text x="187.2" y="432.8" font-size="8.5" fill="#555" text-anchor="end">5</text>
<text x="247" y="432.8" font-size="8.5" fill="#555" text-anchor="end">0 mV</text>
<circle cx="594.3" cy="427.40" r="2.1" fill="none" stroke="#333" stroke-width="1.4"/>
<circle cx="590.7" cy="431.10" r="1.7" fill="#6a6a6a"/>
<rect x="33" y="436.80" width="603" height="1" fill="#eeeeee"/>
<text x="39.8" y="454.8" font-size="8.5" fill="#555">Voltage "V1.1"</text>
<text x="187.2" y="454.8" font-size="8.5" fill="#555" text-anchor="end">7</text>
<text x="247" y="454.8" font-size="8.5" fill="#555" text-anchor="end">1,094 mV</text>
<text x="395.2" y="454.8" font-size="8.5" fill="#555" text-anchor="end">1,094 mV</text>
<text x="544.5" y="454.8" font-size="8.5" fill="#555" text-anchor="end">1,094 mV</text>
<circle cx="594.3" cy="449.40" r="2.1" fill="none" stroke="#333" stroke-width="1.4"/>
<circle cx="590.7" cy="453.10" r="1.7" fill="#6a6a6a"/>
<rect x="33" y="458.80" width="603" height="1" fill="#eeeeee"/>
<text x="39.8" y="476.8" font-size="8.5" fill="#555">Voltage "V3.3"</text>
<text x="187.2" y="476.8" font-size="8.5" fill="#555" text-anchor="end">8</text>
<text x="247" y="476.8" font-size="8.5" fill="#555" text-anchor="end">3,327 mV</text>
<text x="395.2" y="476.8" font-size="8.5" fill="#555" text-anchor="end">3,327 mV</text>
<text x="544.5" y="476.8" font-size="8.5" fill="#555" text-anchor="end">3,327 mV</text>
<circle cx="594.3" cy="471.40" r="2.1" fill="none" stroke="#333" stroke-width="1.4"/>
<circle cx="590.7" cy="475.10" r="1.7" fill="#6a6a6a"/>
<rect x="33" y="480.80" width="603" height="1" fill="#eeeeee"/>
</svg>
</body></html>
